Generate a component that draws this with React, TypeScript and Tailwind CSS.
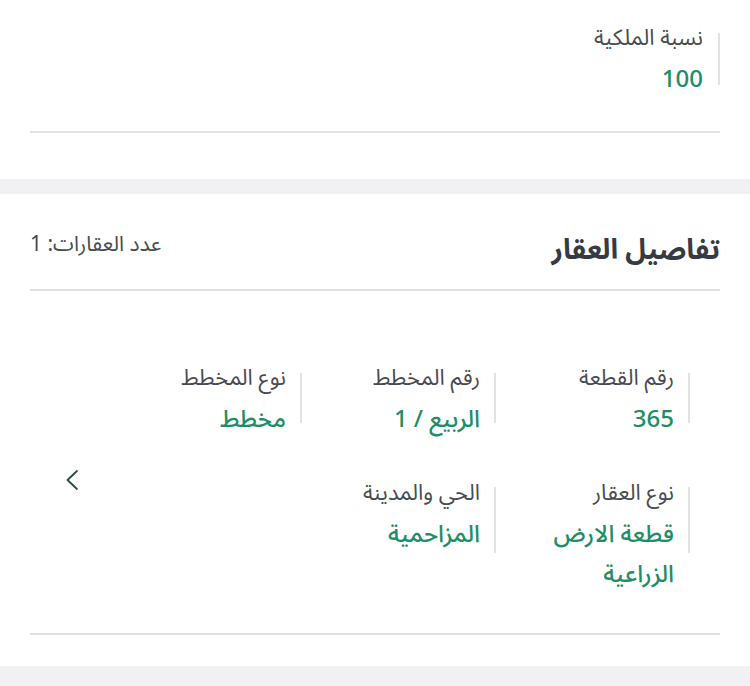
const font = { fontFamily: '"Noto Sans Arabic", "Noto Sans", "DejaVu Sans", sans-serif' };

type FieldProps = { label: string; value: string; barH: string };

function Field({ label, value, barH }: FieldProps) {
  return (
    <div className="flex items-start">
      <div className={`w-[2px] shrink-0 bg-[#e2e2e4] ${barH}`} />
      <div className="ps-[14px] max-w-[150px]">
        <div className="text-[22px] leading-[28px] text-[#474b51] whitespace-nowrap">{label}</div>
        <div className="mt-[8px] text-[24px] leading-[40px] font-medium text-[#1f8d66]">{value}</div>
      </div>
    </div>
  );
}

export default function App() {
  return (
    <div dir="rtl" style={font} className="w-[750px] h-[686px] bg-[#f1f1f3] overflow-hidden">
      <div className="bg-white px-[30px] pb-[46px]">
        <div className="pt-[24px] pb-[31px] border-b-2 border-[#e1e1e3]">
          <div className="flex items-start">
            <div className="w-[2px] h-[52px] mt-[9px] me-[2px] bg-[#e2e2e4]" />
            <div className="ps-[13px]">
              <div className="text-[22px] leading-[28px] text-[#474b51]">نسبة الملكية</div>
              <div className="mt-[8px] text-[24px] leading-[40px] font-medium text-[#1f8d66]">100</div>
            </div>
          </div>
        </div>
      </div>

      <div className="mt-[15px] bg-white px-[30px] pb-[31px]">
        <div className="flex justify-between items-start border-b-2 border-[#e1e1e3] pb-[20px]">
          <h2 className="mt-[39px] text-[28px] leading-[36px] font-bold text-[#363b42]">تفاصيل العقار</h2>
          <div className="mt-[36px] text-[21px] leading-[28px] text-[#474b51] ps-[2px]">عدد العقارات: 1</div>
        </div>

        <div className="flex pt-[73px] pb-[38px] border-b-2 border-[#e1e1e3]">
          <div className="ms-[30px] grid grid-cols-[194px_194px_194px] gap-y-[39px]">
            <Field label="رقم القطعة" value="365" barH="h-[50px] mt-[9px]" />
            <Field label="رقم المخطط" value="الربيع / 1" barH="h-[50px] mt-[9px]" />
            <Field label="نوع المخطط" value="مخطط" barH="h-[50px] mt-[9px]" />
            <Field label="نوع العقار" value="قطعة الارض الزراعية" barH="h-[66px] mt-[8px]" />
            <Field label="الحي والمدينة" value="المزاحمية" barH="h-[66px] mt-[8px]" />
          </div>
          <div className="flex-1 flex items-center justify-end pe-[35px]">
            <svg width="14" height="22" viewBox="0 0 14 22" fill="none">
              <path d="M12 2 L2.5 11 L12 20" stroke="#2d4a40" strokeWidth="1.8" strokeLinecap="round" strokeLinejoin="round" />
            </svg>
          </div>
        </div>
      </div>
    </div>
  );
}
